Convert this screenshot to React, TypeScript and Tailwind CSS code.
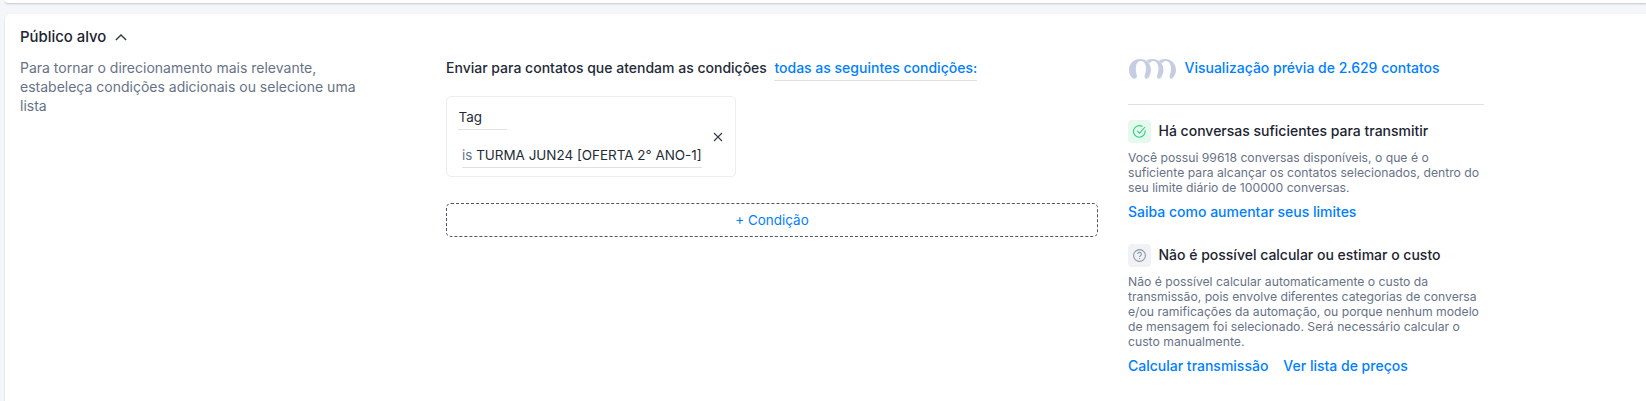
import type { ReactNode } from 'react'
import { clsx } from 'clsx'

type LinkTextProps = {
  children: ReactNode
  className?: string
}

function LinkText({ children, className }: LinkTextProps) {
  return (
    <a href="#" className={clsx('whitespace-nowrap font-medium text-[#0080ff]', className)}>
      {children}
    </a>
  )
}

function ChevronUpIcon() {
  return (
    <svg width="12" height="8" viewBox="0 0 12 8" fill="none" aria-hidden>
      <path d="M.9 7 6 2l5.1 5" stroke="#323a46" strokeWidth="1.4" />
    </svg>
  )
}

function CloseIcon() {
  return (
    <svg width="10" height="10" viewBox="0 0 10 10" fill="none" aria-hidden>
      <path d="M1 1l8 8M9 1 1 9" stroke="#323a46" strokeWidth="1.1" />
    </svg>
  )
}

function CheckCircleIcon() {
  return (
    <svg width="13" height="13" viewBox="0 0 13 13" fill="none" stroke="#2fd07f" strokeWidth="1.1" aria-hidden>
      <path d="M12 5.3A5.8 5.8 0 1 1 9.4 1.5" />
      <path d="M4.2 5.8 6.5 8.1 12 2" />
    </svg>
  )
}

function QuestionCircleIcon() {
  return (
    <svg width="13" height="13" viewBox="0 0 13 13" fill="none" stroke="#8c97a8" strokeWidth="1.1" aria-hidden>
      <circle cx="6.5" cy="6.5" r="5.9" />
      <path d="M4.6 5.1a1.9 1.9 0 1 1 2.9 1.6c-.7.4-1 .7-1 1.4" />
      <path d="M6.5 9v1" />
    </svg>
  )
}

// Three overlapping avatar placeholders, the first one on top
function ContactAvatars() {
  return (
    <svg width="49" height="22" viewBox="0 0 49 22" aria-hidden>
      {[26, 13.5, 1].map((x) => (
        <g key={x} transform={`translate(${x} 0)`}>
          <path
            d="M4.4 20.8C1.6 19 0 15.5 0 12C0 5.6 4.9 1 11 1C17.1 1 22 5.6 22 12C22 15.5 20.4 19 17.6 20.8Z"
            fill="#fff"
            stroke="#fff"
            strokeWidth="0.6"
          />
          <path
            d="M4.4 20.8C1.6 19 0 15.5 0 12C0 5.6 4.9 1 11 1C17.1 1 22 5.6 22 12C22 15.5 20.4 19 17.6 20.8C16 20.8 15.4 19.6 15.6 17.8C15.9 16.2 17 14.5 17 10.8C17 6.4 15 3.1 11.8 3.1C8.6 3.1 6.8 6.4 6.8 10.8C6.8 14.5 7.7 16.2 7.9 17.8C8.1 19.6 6.8 20.8 4.4 20.8Z"
            fill="#c5cde2"
          />
        </g>
      ))}
    </svg>
  )
}

type StatusBlockProps = {
  icon: ReactNode
  iconClassName: string
  title: string
  lines: string[]
  children: ReactNode
}

function StatusBlock({ icon, iconClassName, title, lines, children }: StatusBlockProps) {
  return (
    <section>
      <div className="flex h-[23px] items-center gap-[7.5px]">
        <span className={clsx('flex size-[23px] items-center justify-center rounded', iconClassName)}>{icon}</span>
        <h3 className="whitespace-nowrap pb-0.5 text-sm font-medium leading-[19px] text-[#1c2430]">{title}</h3>
      </div>
      <p className="mt-[7px] text-[12.2px] leading-[15px] text-[#677288]">
        {lines.map((line) => (
          <span key={line} className="block whitespace-nowrap">
            {line}
          </span>
        ))}
      </p>
      <div className="mt-[7px] flex gap-[15px] text-sm leading-5">{children}</div>
    </section>
  )
}

function Conditions() {
  return (
    <div className="w-[652px] shrink-0">
      <div className="flex h-[23px] gap-[7.5px] whitespace-nowrap text-sm font-medium leading-[19px] text-[#242b37]">
        <span>Enviar para contatos que atendam as condições</span>
        <LinkText className="border-b border-[#dfe1e5]">todas as seguintes condições:</LinkText>
      </div>

      <div className="mt-[15px] flex h-[81px] w-[290px] rounded-[5px] border border-[#ededf0] pl-[11px] text-[13.45px] text-[#242b37]">
        <div className="flex flex-col items-start pt-[11px]">
          <div className="h-[22px] w-[49px] border-b border-[#dfe1e5] pl-[0.5px] leading-[18px]">Tag</div>
          <div className="ml-1 mt-4 h-[22px] w-60 whitespace-nowrap border-b border-[#dfe1e5] leading-[18px]">
            <span className="text-[#677288]">is</span> TURMA JUN24 [OFERTA 2° ANO-1]
          </div>
        </div>
        <button type="button" aria-label="Remover" className="ml-[11px] mt-px self-center">
          <CloseIcon />
        </button>
      </div>

      <button
        type="button"
        className="mt-[26px] flex h-[34px] w-full items-center justify-center rounded-[5px] border border-dashed border-[#4d566b] text-[13.45px] text-[#0080ff]"
      >
        + Condição
      </button>
    </div>
  )
}

function AudienceSummary() {
  return (
    <aside className="w-[356px] shrink-0">
      <div className="flex h-[47px] items-start gap-[7.5px] border-b border-[#dfe1e5] text-sm leading-5">
        <ContactAvatars />
        <LinkText>Visualização prévia de 2.629 contatos</LinkText>
      </div>

      <div className="mt-[15px] flex flex-col gap-[22px]">
        <StatusBlock
          icon={<CheckCircleIcon />}
          iconClassName="bg-[#e6f9ef]"
          title="Há conversas suficientes para transmitir"
          lines={[
            'Você possui 99618 conversas disponíveis, o que é o',
            'suficiente para alcançar os contatos selecionados, dentro do',
            'seu limite diário de 100000 conversas.',
          ]}
        >
          <LinkText>Saiba como aumentar seus limites</LinkText>
        </StatusBlock>
        <StatusBlock
          icon={<QuestionCircleIcon />}
          iconClassName="bg-[#f1f2f5]"
          title="Não é possível calcular ou estimar o custo"
          lines={[
            'Não é possível calcular automaticamente o custo da',
            'transmissão, pois envolve diferentes categorias de conversa',
            'e/ou ramificações da automação, ou porque nenhum modelo',
            'de mensagem foi selecionado. Será necessário calcular o',
            'custo manualmente.',
          ]}
        >
          <LinkText>Calcular transmissão</LinkText>
          <LinkText>Ver lista de preços</LinkText>
        </StatusBlock>
      </div>
    </aside>
  )
}

export default function App() {
  return (
    <div className="h-[401px] overflow-hidden bg-[#f5f6f9] pl-[5px] font-['Inter',sans-serif]">
      <div className="h-[3px] rounded-bl-[5px] bg-white shadow-[0_1px_2px_rgba(40,60,90,0.25)]" />
      <main className="mt-[11px] h-[400px] rounded-tl-[5px] bg-white pl-[15px] pt-[13px] shadow-[0_1px_2px_rgba(40,60,90,0.2)]">
        <h2 className="flex h-5 items-center gap-[9px] text-[14.9px] font-medium text-[#1c2430]">
          Público alvo
          <ChevronUpIcon />
        </h2>
        <div className="mt-[11px] flex">
          <p className="mr-[86px] w-[340px] shrink-0 text-sm leading-[19px] text-[#677288]">
            Para tornar o direcionamento mais relevante, estabeleça condições adicionais ou selecione uma lista
          </p>
          <Conditions />
          <div className="ml-[30px]">
            <AudienceSummary />
          </div>
        </div>
      </main>
    </div>
  )
}
